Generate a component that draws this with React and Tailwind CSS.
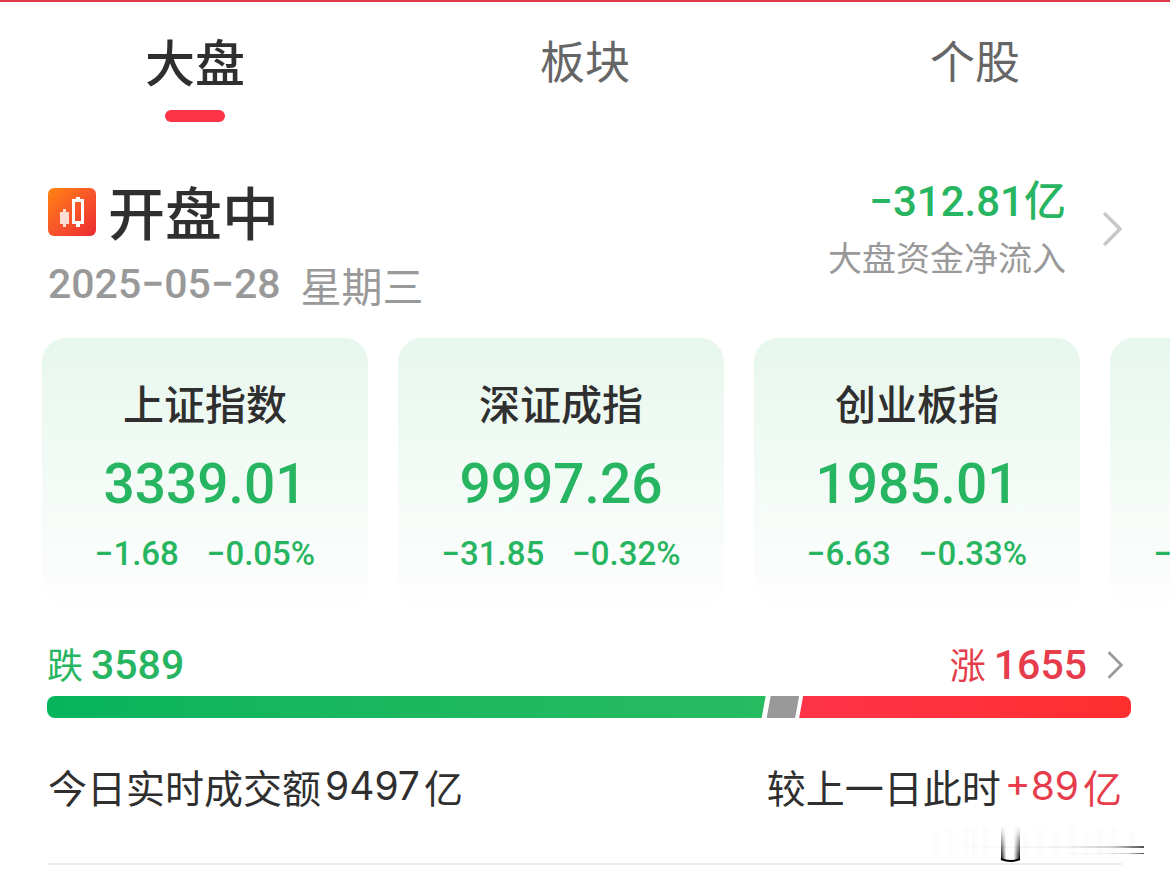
import React from 'react';
import clsx from 'clsx';

const tabs = ['大盘', '板块', '个股'];

const indices = [
  { name: '上证指数', value: '3339.01', change: '−1.68', percent: '−0.05%' },
  { name: '深证成指', value: '9997.26', change: '−31.85', percent: '−0.32%' },
  { name: '创业板指', value: '1985.01', change: '−6.63', percent: '−0.33%' },
  { name: '北证50', value: '1385.69', change: '−15.42', percent: '−1.10%' },
];

const breadth = { down: 3589, flat: 162, up: 1655 };

const NUM = "font-['Roboto','Noto_Sans_CJK_SC',sans-serif] font-medium";

const MarketIcon = () => (
  <svg viewBox="0 0 48 48" className="size-12 shrink-0" aria-hidden="true">
    <defs>
      <linearGradient id="market-bg" x1="0" y1="0" x2="1" y2="1">
        <stop offset="0" stopColor="#ff8410" />
        <stop offset="0.5" stopColor="#f8562a" />
        <stop offset="1" stopColor="#ea2a30" />
      </linearGradient>
    </defs>
    <rect width="48" height="48" rx="6" fill="url(#market-bg)" />
    <path d="M12 24h3v-3h3v3h3v12h-3v3h-3v-3h-3z" fill="#fff" fillOpacity="0.8" />
    <path d="M28 9h4v3h-4zM28 36h4v3h-4z" fill="#fff" />
    <rect x="25.5" y="12.5" width="9" height="22" fill="none" stroke="#fff" strokeWidth="3" />
  </svg>
);

const Chevron = ({ className }) => (
  <svg viewBox="0 0 20 36" fill="none" stroke="currentColor" className={className} aria-hidden="true">
    <path d="M2 2l16 16L2 34" strokeWidth="3.4" />
  </svg>
);

// Faded stamp in the lower right corner
const Watermark = () => (
  <svg viewBox="0 0 216 40" className="absolute right-[26px] bottom-0 h-10 w-[216px]" aria-hidden="true">
    <defs>
      <linearGradient id="mark-fade" x1="0" y1="0" x2="0" y2="1">
        <stop offset="0" stopColor="#fff" />
        <stop offset="0.2" stopColor="#fff" stopOpacity="0.85" />
        <stop offset="1" stopColor="#fff" stopOpacity="0" />
      </linearGradient>
      <linearGradient id="mark-left" x1="0" y1="0" x2="1" y2="0">
        <stop offset="0" stopColor="#000" />
        <stop offset="1" stopColor="#000" stopOpacity="0.05" />
      </linearGradient>
      <linearGradient id="mark-right" x1="0" y1="0" x2="1" y2="0">
        <stop offset="0" stopColor="#000" stopOpacity="0.05" />
        <stop offset="1" stopColor="#000" />
      </linearGradient>
      <linearGradient id="mark-h" x1="0" y1="0" x2="1" y2="0">
        <stop offset="0" stopColor="#000" stopOpacity="0" />
        <stop offset="0.6" stopColor="#000" stopOpacity="0.05" />
        <stop offset="0.85" stopColor="#000" stopOpacity="0.2" />
        <stop offset="1" stopColor="#000" stopOpacity="0.7" />
      </linearGradient>
    </defs>
    <path
      d="M8 6v26M22 4v30M38 2v32M47 4v28M58 2v32M98 6v28M112 4v30M128 8v26M144 2v32M158 6v28M172 4v28M186 2v32M204 6v26"
      stroke="#000"
      strokeOpacity="0.01"
      strokeWidth="6"
    />
    <rect x="73" y="2" width="5" height="33" fill="url(#mark-left)" />
    <rect x="86" y="2" width="6" height="33" fill="url(#mark-right)" />
    <rect x="72" y="1" width="21" height="33" fill="url(#mark-fade)" />
    <path d="M73 34q9.5 4 19 0" fill="none" stroke="#000" strokeWidth="2" />
    <rect x="20" y="21" width="196" height="2" fill="url(#mark-h)" />
    <rect x="110" y="28" width="106" height="1" fill="url(#mark-h)" />
  </svg>
);

const IndexCard = ({ item }) => (
  <li className="flex w-[326px] shrink-0 flex-col items-center rounded-3xl bg-linear-to-b from-[#e7f7ed] to-[#fefefe] pt-9 pb-8 text-[#27b561]">
    <h2 className="text-[41px] leading-[56px] font-medium text-[#2f2f2f]">{item.name}</h2>
    <p className={clsx(NUM, 'mt-6 text-[55px] leading-[60px]')}>{item.value}</p>
    <p className={clsx(NUM, 'mt-5 flex gap-7 text-[33px] leading-[40px]')}>
      <span>{item.change}</span>
      <span>{item.percent}</span>
    </p>
  </li>
);

export default function App() {
  return (
    <main className="overflow-hidden border-t-2 border-[#e0364a] bg-white font-['Noto_Sans_CJK_SC',sans-serif] text-[#2f2f2f]">
      <nav className="grid grid-cols-3 pt-7">
        {tabs.map((tab, index) => (
          <button key={tab} type="button" className="flex flex-col items-center">
            <span
              className={clsx(
                'leading-[60px]',
                index === 0 ? 'text-[50px] font-medium' : 'text-[45px] text-[#666]'
              )}
            >
              {tab}
            </span>
            {index === 0 && <span className="mt-5 h-3 w-15 rounded-full bg-[#ff3348]" />}
          </button>
        ))}
      </nav>

      <section className="flex items-start justify-between pt-[52px] pr-12 pl-12">
        <div>
          <div className="flex h-[76px] items-center gap-3">
            <MarketIcon />
            <h1 className="pb-1 text-[57px] leading-[68px] font-medium">开盘中</h1>
          </div>
          <p className="flex items-center gap-5 text-[41px] leading-[68px] text-[#999]">
            <span className="font-['Roboto',sans-serif] font-medium">2025−05−28</span>
            <span>星期三</span>
          </p>
        </div>
        <a href="#flow" className="flex items-center gap-9">
          <span className="flex flex-col items-end">
            <span className={clsx(NUM, 'text-[42px] leading-[56px] text-[#27b561]')}>−312.81亿</span>
            <span className="text-[34px] leading-[54px] text-[#999]">大盘资金净流入</span>
          </span>
          <Chevron className="h-9 w-5 text-[#c8c8c8]" />
        </a>
      </section>

      <ul className="mt-5 flex gap-[30px] pl-[42px]">
        {indices.map((item) => (
          <IndexCard key={item.name} item={item} />
        ))}
      </ul>

      <section className="mt-8 pr-[39px] pl-[47px]">
        <div className="flex items-center justify-between">
          <p className="flex items-center gap-2 leading-[54px] text-[#27b561]">
            <span className="pb-1 text-[36px] leading-[50px]">跌</span>
            <span className={clsx(NUM, 'text-[41px]')}>{breadth.down}</span>
          </p>
          <a href="#breadth" className="flex items-center gap-2 pr-2 leading-[54px] text-[#e63c4b]">
            <span className="pb-1 text-[36px] leading-[50px]">涨</span>
            <span className={clsx(NUM, 'text-[41px]')}>{breadth.up}</span>
            <Chevron className="ml-3 h-8 w-4 text-[#999]" />
          </a>
        </div>
        <div className="mt-1 flex h-[22px] overflow-hidden rounded-lg">
          <div
            className="bg-linear-to-r from-[#06b45c] to-[#27bb62] [clip-path:polygon(0_0,calc(100%-1px)_0,calc(100%-5px)_100%,0_100%)]"
            style={{ flex: breadth.down }}
          />
          <div
            className="bg-[#999] [clip-path:polygon(4px_0,100%_0,calc(100%-4px)_100%,0_100%)]"
            style={{ flex: breadth.flat }}
          />
          <div
            className="bg-linear-to-r from-[#ff3348] to-[#ff2e2e] [clip-path:polygon(4px_0,100%_0,100%_100%,0_100%)]"
            style={{ flex: breadth.up }}
          />
        </div>
      </section>

      <section className="relative px-12 pt-[42px]">
        <div className="flex justify-between pb-[51px] text-[39px] leading-[52px]">
          <p className="flex gap-1">
            <span>今日实时成交额</span>
            <span className="font-['Inter',sans-serif]">9497</span>
            <span>亿</span>
          </p>
          <p className="flex gap-1">
            <span>较上一日此时</span>
            <span className="font-['Inter',sans-serif] text-[#e63c4b]">+89</span>
            <span className="text-[#e63c4b]">亿</span>
          </p>
        </div>
        <hr className="border-t-2 border-[#ececec]" />
        <Watermark />
      </section>
    </main>
  );
}
